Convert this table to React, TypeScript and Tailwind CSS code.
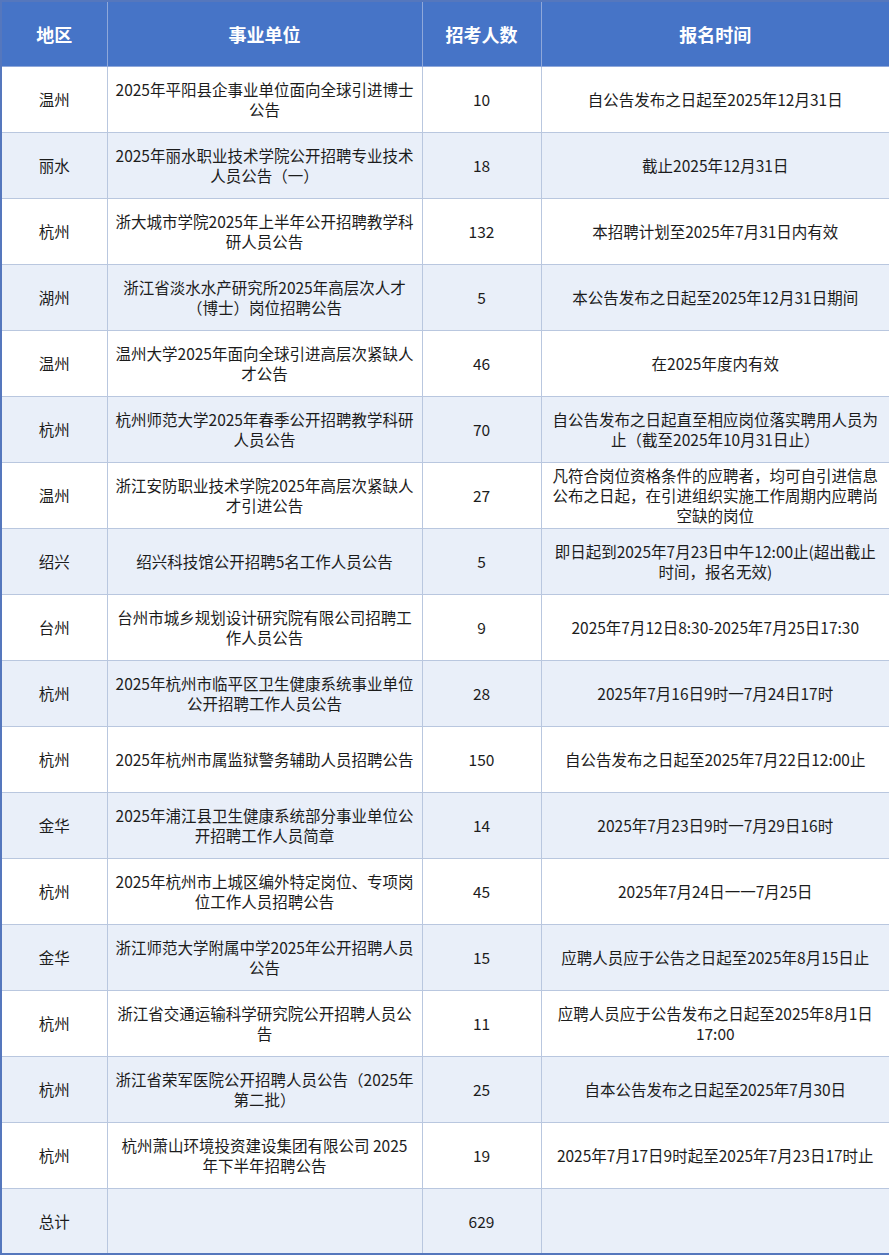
import clsx from 'clsx';

type Row = {
  region: string;
  unit: string[];
  count: string;
  time: string[];
};

const ROWS: Row[] = [
  { region: '温州', unit: ['2025年平阳县企事业单位面向全球引进博士', '公告'], count: '10', time: ['自公告发布之日起至2025年12月31日'] },
  { region: '丽水', unit: ['2025年丽水职业技术学院公开招聘专业技术', '人员公告（一）'], count: '18', time: ['截止2025年12月31日'] },
  { region: '杭州', unit: ['浙大城市学院2025年上半年公开招聘教学科', '研人员公告'], count: '132', time: ['本招聘计划至2025年7月31日内有效'] },
  { region: '湖州', unit: ['浙江省淡水水产研究所2025年高层次人才', '（博士）岗位招聘公告'], count: '5', time: ['本公告发布之日起至2025年12月31日期间'] },
  { region: '温州', unit: ['温州大学2025年面向全球引进高层次紧缺人', '才公告'], count: '46', time: ['在2025年度内有效'] },
  {
    region: '杭州',
    unit: ['杭州师范大学2025年春季公开招聘教学科研', '人员公告'],
    count: '70',
    time: ['自公告发布之日起直至相应岗位落实聘用人员为', '止（截至2025年10月31日止）'],
  },
  {
    region: '温州',
    unit: ['浙江安防职业技术学院2025年高层次紧缺人', '才引进公告'],
    count: '27',
    time: ['凡符合岗位资格条件的应聘者，均可自引进信息', '公布之日起，在引进组织实施工作周期内应聘尚', '空缺的岗位'],
  },
  {
    region: '绍兴',
    unit: ['绍兴科技馆公开招聘5名工作人员公告'],
    count: '5',
    time: ['即日起到2025年7月23日中午12:00止(超出截止', '时间，报名无效)'],
  },
  { region: '台州', unit: ['台州市城乡规划设计研究院有限公司招聘工', '作人员公告'], count: '9', time: ['2025年7月12日8:30-2025年7月25日17:30'] },
  { region: '杭州', unit: ['2025年杭州市临平区卫生健康系统事业单位', '公开招聘工作人员公告'], count: '28', time: ['2025年7月16日9时一7月24日17时'] },
  { region: '杭州', unit: ['2025年杭州市属监狱警务辅助人员招聘公告'], count: '150', time: ['自公告发布之日起至2025年7月22日12:00止'] },
  { region: '金华', unit: ['2025年浦江县卫生健康系统部分事业单位公', '开招聘工作人员简章'], count: '14', time: ['2025年7月23日9时一7月29日16时'] },
  { region: '杭州', unit: ['2025年杭州市上城区编外特定岗位、专项岗', '位工作人员招聘公告'], count: '45', time: ['2025年7月24日一一7月25日'] },
  { region: '金华', unit: ['浙江师范大学附属中学2025年公开招聘人员', '公告'], count: '15', time: ['应聘人员应于公告之日起至2025年8月15日止'] },
  {
    region: '杭州',
    unit: ['浙江省交通运输科学研究院公开招聘人员公', '告'],
    count: '11',
    time: ['应聘人员应于公告发布之日起至2025年8月1日', '17:00'],
  },
  { region: '杭州', unit: ['浙江省荣军医院公开招聘人员公告（2025年', '第二批）'], count: '25', time: ['自本公告发布之日起至2025年7月30日'] },
  {
    region: '杭州',
    unit: ['杭州萧山环境投资建设集团有限公司 2025', '年下半年招聘公告'],
    count: '19',
    time: ['2025年7月17日9时起至2025年7月23日17时止'],
  },
];

// keeps the reference's line breaks instead of letting the browser wrap
function Lines({ lines }: { lines: string[] }) {
  return (
    <>
      {lines.map((l, i) => (
        <div key={i} className="whitespace-nowrap">
          {l}
        </div>
      ))}
    </>
  );
}

const cell = 'h-[66px] border border-[#b9c7df] px-1 text-center align-middle';

export default function App() {
  return (
    <div
      className="w-[889px] bg-white text-[#1c1c1c]"
      style={{ fontFamily: '"Noto Sans CJK SC", "Noto Sans", sans-serif' }}
    >
      <table className="w-[889px] table-fixed border-collapse border-2 border-[#5577bd] text-[15.5px] leading-[20px]">
        <colgroup>
          <col className="w-[106px]" />
          <col className="w-[315px]" />
          <col className="w-[119px]" />
          <col className="w-[349px]" />
        </colgroup>
        <thead>
          <tr className="bg-[#4674c7] text-[18px] font-bold text-white">
            <th className="h-[65px] border border-[#8fa8da] text-center">地区</th>
            <th className="h-[65px] border border-[#8fa8da] text-center">事业单位</th>
            <th className="h-[65px] border border-[#8fa8da] text-center">招考人数</th>
            <th className="h-[65px] border border-[#8fa8da] text-center">报名时间</th>
          </tr>
        </thead>
        <tbody>
          {ROWS.map((r, i) => (
            <tr key={i} className={clsx(i % 2 === 0 ? 'bg-white' : 'bg-[#e9eff9]')}>
              <td className={cell}>{r.region}</td>
              <td className={cell}>
                <Lines lines={r.unit} />
              </td>
              <td className={cell}>{r.count}</td>
              <td className={cell}>
                <Lines lines={r.time} />
              </td>
            </tr>
          ))}
          <tr className="bg-[#e9eff9]">
            <td className={cell}>总计</td>
            <td className={cell}></td>
            <td className={cell}>629</td>
            <td className={cell}></td>
          </tr>
        </tbody>
      </table>
    </div>
  );
}
